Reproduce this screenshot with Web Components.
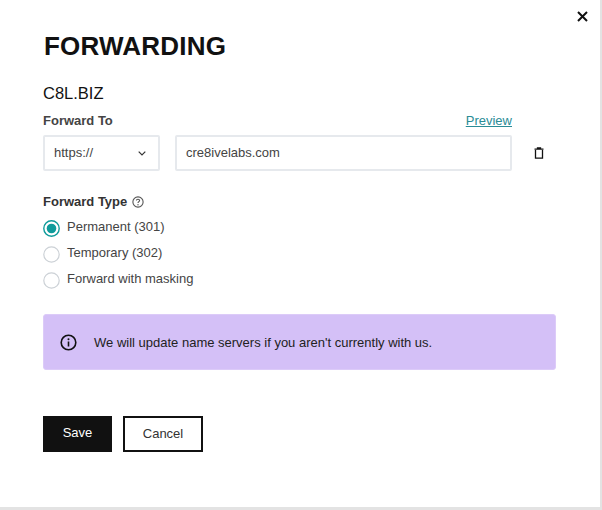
<!DOCTYPE html>
<html><head><meta charset="utf-8"><style>
html,body{margin:0;padding:0;background:#e3e3e3;height:510px;overflow:hidden;font-family:"Liberation Sans",Arial,sans-serif;color:#111}
</style></head><body>
<fw-dialog>
  <fw-field-row></fw-field-row>
  <fw-type-group></fw-type-group>
  <fw-note>We will update name servers if you aren't currently with us.</fw-note>
  <fw-actions></fw-actions>
</fw-dialog>
<script>
function def(name,html){customElements.define(name,class extends HTMLElement{constructor(){super();this.attachShadow({mode:'open'}).innerHTML=html}})}
def('fw-dialog',`<style>
:host{display:block;position:relative;box-sizing:border-box;width:600px;height:507px;background:#fff;padding:30px 46px 0 43px}
h1{margin:0;font-size:26px;line-height:32px;font-weight:700;color:#111;letter-spacing:.2px;padding-left:1px}
.dom{margin-top:21px;font-size:16.5px;line-height:20px;color:#111}
.x{position:absolute;left:576px;top:10px;width:13px;height:13px;display:block}
</style>
<svg class="x" viewBox="0 0 13 13"><path d="M2 2 11 11M11 2 2 11" stroke="#111" stroke-width="2" fill="none"/></svg>
<h1>FORWARDING</h1><div class="dom">C8L.BIZ</div><slot></slot>`);
def('fw-field-row',`<style>
:host{display:block;margin-top:9px;width:513px}
.head{display:flex;justify-content:space-between;align-items:flex-end;height:18px;font-size:13px;line-height:18px;width:469px}
b{color:#444;font-weight:700}
a{color:#2a8c96;text-decoration:underline}
.row{display:flex;margin-top:5px;position:relative;gap:15px;width:469px}
.box{box-sizing:border-box;height:36px;border:2px solid #e6e9ed;border-radius:2px;font-size:13px;line-height:32px;color:#444;padding-left:9px;display:flex;justify-content:space-between;align-items:center}
.sel{width:117px;padding-right:12px}
.inp{width:337px}
.rowwrap{display:flex;align-items:center;gap:22px}
</style>
<div class="head"><b>Forward To</b><a href="#">Preview</a></div>
<div class="rowwrap"><div class="row"><div class="box sel">https://<svg width="8" height="5" viewBox="0 0 8 5"><path d="M.7.7 4 4 7.3.7" stroke="#333" stroke-width="1.2" fill="none"/></svg></div><div class="box inp">cre8ivelabs.com</div></div>
<svg width="10" height="12" viewBox="0 0 10 12" style="margin-top:4px;flex:none"><path d="M1.5 3v8.2h7V3M0.5 2.2h9M3.5 2V.8h3V2" stroke="#111" stroke-width="1.3" fill="none"/></svg></div>`);
def('fw-type-group',`<style>
:host{display:block;margin-top:22px}
.t{display:flex;align-items:center;gap:5px;font-size:13px;line-height:18px;font-weight:700;color:#333}
.r{display:flex;align-items:center;gap:7px;height:26px;font-size:13px;color:#444}
.r span{position:relative;top:-2px}
.list{margin-top:4px}
svg{flex:none}
</style>
<div class="t">Forward Type <svg width="12" height="12" viewBox="0 0 11 11"><circle cx="5.5" cy="5.5" r="4.7" fill="none" stroke="#555"/><path d="M4 4.2C4 2.6 7 2.6 7 4.2 7 5.2 5.5 5.2 5.5 6.4" fill="none" stroke="#555"/><circle cx="5.5" cy="8" r=".6" fill="#555"/></svg></div>
<div class="list">
<div class="r"><svg width="17" height="17" viewBox="0 0 17 17"><circle cx="8.5" cy="8.5" r="7.7" fill="#fff" stroke="#0f9b9b" stroke-width="1.4"/><circle cx="8.5" cy="8.5" r="4.8" fill="#0f9b9b"/></svg><span>Permanent (301)</span></div>
<div class="r"><svg width="17" height="17" viewBox="0 0 17 17"><circle cx="8.5" cy="8.5" r="7.7" fill="#fff" stroke="#ccd1d6" stroke-width="1.2"/></svg><span>Temporary (302)</span></div>
<div class="r"><svg width="17" height="17" viewBox="0 0 17 17"><circle cx="8.5" cy="8.5" r="7.7" fill="#fff" stroke="#ccd1d6" stroke-width="1.2"/></svg><span>Forward with masking</span></div>
</div>`);
def('fw-note',`<style>
:host{display:flex;align-items:center;box-sizing:border-box;margin-top:21px;width:513px;height:56px;background:#d4c0f7;border:1px solid #dccbf8;border-radius:3px;padding-left:16px;gap:17px;font-size:13px;color:#222}
svg{flex:none}
</style>
<svg width="17" height="17" viewBox="0 0 17 17"><circle cx="8.5" cy="8.5" r="7.3" fill="none" stroke="#111" stroke-width="1.6"/><path d="M8.5 7.5v5" stroke="#111" stroke-width="1.6"/><circle cx="8.5" cy="5.2" r="1" fill="#111"/></svg><slot></slot>`);
def('fw-actions',`<style>
:host{display:flex;gap:11px;margin-top:46px}
div{box-sizing:border-box;height:36px;display:flex;align-items:center;justify-content:center;font-size:13px;padding-bottom:3px}
.s{width:69px;background:#111;color:#fff}
.c{width:80px;border:2px solid #111;color:#333;padding-bottom:2px}
</style><div class="s">Save</div><div class="c">Cancel</div>`);
</script></body></html>
